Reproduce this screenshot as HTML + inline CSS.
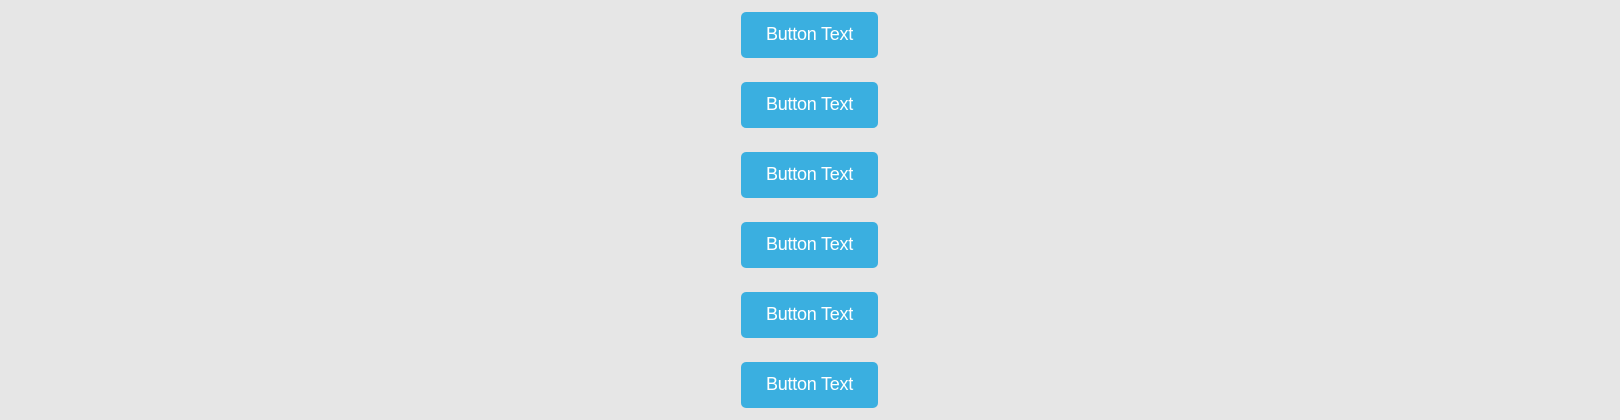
<!DOCTYPE html>
<html><head><style>
html,body{margin:0;padding:0;background:#e6e6e6;width:1620px;height:420px;overflow:hidden}
.b{position:absolute;left:741px;width:137px;height:46px;background:#3aafe0;border-radius:5px;color:#fff;font:18px "Liberation Sans",sans-serif;letter-spacing:-0.25px;line-height:44px;text-align:center}
</style></head><body>
<div class="b" style="top:12px">Button Text</div>
<div class="b" style="top:82px">Button Text</div>
<div class="b" style="top:152px">Button Text</div>
<div class="b" style="top:222px">Button Text</div>
<div class="b" style="top:292px">Button Text</div>
<div class="b" style="top:362px">Button Text</div>
</body></html>
